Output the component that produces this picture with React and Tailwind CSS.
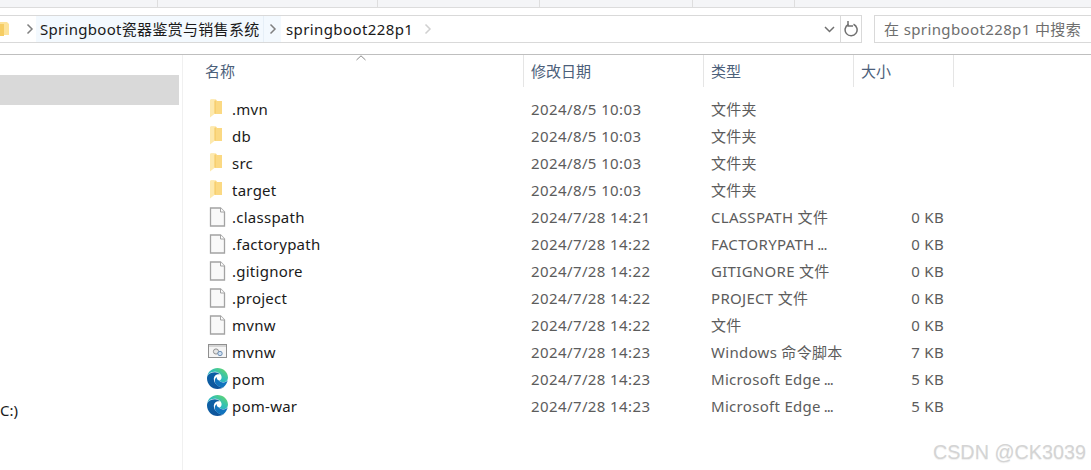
const FONT = 'font-["Noto_Sans","Noto_Sans_CJK_SC",sans-serif]';

const FILES = [
  { name: '.mvn', date: '2024/8/5 10:03', type: '文件夹', size: '', icon: 'folder' },
  { name: 'db', date: '2024/8/5 10:03', type: '文件夹', size: '', icon: 'folder' },
  { name: 'src', date: '2024/8/5 10:03', type: '文件夹', size: '', icon: 'folder' },
  { name: 'target', date: '2024/8/5 10:03', type: '文件夹', size: '', icon: 'folder' },
  { name: '.classpath', date: '2024/7/28 14:21', type: 'CLASSPATH 文件', size: '0 KB', icon: 'file' },
  { name: '.factorypath', date: '2024/7/28 14:22', type: 'FACTORYPATH', cut: true, size: '0 KB', icon: 'file' },
  { name: '.gitignore', date: '2024/7/28 14:22', type: 'GITIGNORE 文件', size: '0 KB', icon: 'file' },
  { name: '.project', date: '2024/7/28 14:22', type: 'PROJECT 文件', size: '0 KB', icon: 'file' },
  { name: 'mvnw', date: '2024/7/28 14:22', type: '文件', size: '0 KB', icon: 'file' },
  { name: 'mvnw', date: '2024/7/28 14:23', type: 'Windows 命令脚本', size: '7 KB', icon: 'cmd' },
  { name: 'pom', date: '2024/7/28 14:23', type: 'Microsoft Edge', cut: true, size: '5 KB', icon: 'edge' },
  { name: 'pom-war', date: '2024/7/28 14:23', type: 'Microsoft Edge', cut: true, size: '5 KB', icon: 'edge' },
];

function FolderIcon() {
  return (
    <svg width="21" height="20" viewBox="0 0 21 20" className="shrink-0">
      <path d="M4 .5h5l1 1.500h5v13H7z" fill="#fbd983" />
      <path d="M3 .5h4l1 1.500v12.500L3 18.500z" fill="#fde9ae" />
      <path d="M8 2v12.500" stroke="#f3c65e" fill="none" />
    </svg>
  );
}

function FileIcon() {
  return (
    <svg width="21" height="20" viewBox="0 0 21 20" className="shrink-0">
      <path d="M3.500 1h10l4 4v14h-14z" fill="#f9f9f9" stroke="#a3a3a3" strokeWidth="1.300" />
      <path d="M13.500 1v4h4" fill="#fff" stroke="#a3a3a3" />
    </svg>
  );
}

function CmdIcon() {
  return (
    <svg width="21" height="20" viewBox="0 0 21 20" className="shrink-0">
      <rect x="1.500" y="2.500" width="18" height="13" fill="#f4f4f4" stroke="#8f8f8f" />
      <rect x="2" y="3" width="17" height="2" fill="#d4d4d4" />
      <circle cx="9" cy="9.500" r="2.600" fill="#e6e6e6" stroke="#909090" />
      <circle cx="13" cy="11.500" r="2.200" fill="#cfe0f2" stroke="#6d8fb5" />
    </svg>
  );
}

function EdgeIcon({ id }) {
  return (
    <svg width="21" height="21" viewBox="0 0 20 20" className="shrink-0">
      <defs>
        <linearGradient id={`${id}-top`} x1="0" y1="1" x2="1" y2="0">
          <stop offset="0" stopColor="#1b9de2" />
          <stop offset=".55" stopColor="#35c1b2" />
          <stop offset="1" stopColor="#6fdb5c" />
        </linearGradient>
        <linearGradient id={`${id}-low`} x1="0" y1="0" x2="1" y2="1">
          <stop offset="0" stopColor="#0b63a8" />
          <stop offset="1" stopColor="#0f4f96" />
        </linearGradient>
      </defs>
      <path d="M10 0C15.500 0 20 4 20 9.200c0 2.600-2 4.300-4.600 4.300-1.900 0-3.600-.7-3.800-1.500 1.300-.4 2.300-1.500 2.300-3 0-3-3-5.500-6.500-5.500C4.500 3.500 1.500 4.800.2 8 1 3.400 5 0 10 0z" fill={`url(#${id}-top)`} />
      <path d="M.2 8C1.500 5 4.500 4 7.500 4c2 0 3.700.8 4.700 2-3.200-.5-5.700 1.600-5.700 4.500 0 3.500 3 6.800 7 7.800.9.200 1.700.2 2.500.1C14.500 19.500 12.400 20 10 20 4.500 20 0 15.500 0 10c0-.7.100-1.400.2-2z" fill={`url(#${id}-low)`} />
      <path d="M11.500 12c.5 1 2.200 1.700 4 1.700 2 0 3.500-.8 4.300-2.200-.6 3-2.400 5.400-4.300 6.900-.8.100-1.600.1-2.500-.1-3.300-.9-5.600-3.500-5.600-6 0-1.600.8-3 2-3.700-.4 1.500.6 2.800 2.100 3.400z" fill="#1173bd" />
    </svg>
  );
}

function RowIcon({ kind, id }) {
  if (kind === 'folder') return <FolderIcon />;
  if (kind === 'file') return <FileIcon />;
  if (kind === 'cmd') return <CmdIcon />;
  return <EdgeIcon id={id} />;
}

function Chevron({ color = '#808080' }) {
  return (
    <svg width="8" height="12" viewBox="0 0 8 12" className="shrink-0">
      <path d="M1.500 1.500 6 6l-4.500 4.500" fill="none" stroke={color} strokeWidth="1.500" />
    </svg>
  );
}

function TopStrip() {
  return (
    <div className="flex h-2 bg-[#f4f5f7] border-b border-[#dcdcdc]">
      <div className="w-[158px] border-r border-[#dedede]" />
      <div className="w-[220px] border-r border-[#dedede]" />
      <div className="w-[162px] border-r border-[#dedede]" />
      <div className="w-[153px] border-r border-[#dedede]" />
      <div className="w-[102px] border-r border-[#dedede]" />
    </div>
  );
}

function AddressRow() {
  return (
    <div className="flex h-[47px] pt-[7px] pb-3 bg-white border-b border-[#bfbfbf]">
      <div className="flex w-[862px] h-[28px] border-y border-r border-[#d9d9d9] items-stretch">
        <div className="w-[36px] flex items-center overflow-hidden">
          <svg width="10" height="16" viewBox="0 0 10 16" className="shrink-0">
            <path d="M0 1h7l2 2v11H0z" fill="#fde39a" />
            <path d="M0 3h4v12H0z" fill="#f6cd63" />
          </svg>
          <div className="ml-4"><Chevron /></div>
        </div>
        <div className="w-[227px] bg-[#f3f9fe] pl-1 flex items-center text-[15px] tracking-[0.3px] text-[#1a1a1a] whitespace-nowrap">
          Springboot瓷器鉴赏与销售系统
        </div>
        <div className="w-[18px] bg-[#f3f9fe] border-l border-[#e6eff7] flex items-center justify-center"><Chevron /></div>
        <div className="pl-[5px] flex items-center text-[15px] tracking-[0.4px] text-[#1a1a1a]">springboot228p1</div>
        <div className="ml-[11px] flex items-center"><Chevron color="#d0d0d0" /></div>
        <div className="ml-auto w-[21px] flex items-center justify-center">
          <svg width="11" height="7" viewBox="0 0 11 7"><path d="M1 1l4.500 4.500L10 1" fill="none" stroke="#707070" strokeWidth="1.500" /></svg>
        </div>
        <div className="w-[21px] border-l border-[#d9d9d9] flex items-center justify-center">
          <svg width="15" height="16" viewBox="0 0 15 16"><path d="M9.500 3.300A6 6 0 1 1 4.500 3.400" fill="none" stroke="#707070" strokeWidth="1.500" /><path d="M4 0v5H9" fill="none" stroke="#707070" strokeWidth="1.500" /></svg>
        </div>
      </div>
      <div className="ml-3 flex-1 h-[28px] border-y border-l border-[#d9d9d9] flex items-center pl-[9px] text-[15px] tracking-[0.38px] text-[#6e6e6e] whitespace-nowrap overflow-hidden">
        在 springboot228p1 中搜索
      </div>
    </div>
  );
}

function Sidebar() {
  return (
    <div className="w-[183px] h-[415px] shrink-0 border-r border-[#f0f0f0] pt-5 text-[15px] text-[#1a1a1a]">
      <div className="w-[179px] h-[30px] bg-[#d9d9d9]" />
      <div className="mt-[295px] leading-[20px]">C:)</div>
    </div>
  );
}

function ColumnHeader() {
  return (
    <div className="relative flex h-[32px] text-[15px] text-[#4c607a]">
      <div className="w-[341px] pl-[22px] pt-[5px] border-r border-[#e5e5e5]">名称</div>
      <div className="w-[180px] pl-[7px] pt-[5px] border-r border-[#e5e5e5]">修改日期</div>
      <div className="w-[150px] pl-[7px] pt-[5px] border-r border-[#e5e5e5]">类型</div>
      <div className="w-[100px] pl-[7px] pt-[5px] border-r border-[#e5e5e5]">大小</div>
      <svg width="10" height="6" viewBox="0 0 10 6" className="absolute left-[173px] top-0">
        <path d="M.5 5 5 .8 9.500 5" fill="none" stroke="#8a8a8a" />
      </svg>
    </div>
  );
}

function FileRow({ file, index }) {
  return (
    <div className="flex items-center h-[27px] text-[15px] whitespace-nowrap">
      <div className="w-[49px] pl-[24px] mb-[2px] flex shrink-0"><RowIcon kind={file.icon} id={`edge${index}`} /></div>
      <div className="w-[299px] text-[#1a1a1a] tracking-[0.25px] shrink-0">{file.name}</div>
      <div className="w-[180px] text-[#5c5c5c] tracking-[0.4px] shrink-0">{file.date}</div>
      <div className="w-[171px] text-[#5c5c5c] tracking-[0.3px] shrink-0 overflow-hidden">
        {file.type}
        {file.cut && <span className="tracking-[-1px]"> ...</span>}
      </div>
      <div className="w-[62px] text-[#5c5c5c] tracking-[0.3px] text-right shrink-0">{file.size}</div>
    </div>
  );
}

export default function App() {
  return (
    <div className={`relative w-[1091px] h-[470px] overflow-hidden bg-white ${FONT}`}>
      <TopStrip />
      <AddressRow />
      <div className="flex">
        <Sidebar />
        <div className="flex-1">
          <ColumnHeader />
          <div className="pt-[9px]">
            {FILES.map((f, i) => <FileRow key={i} file={f} index={i} />)}
          </div>
        </div>
      </div>
      <div className="absolute right-[5px] bottom-[6px] text-[19.8px] leading-[23px] text-[#d4d4d4] [text-shadow:0_1px_1px_#eeeeee] font-['Liberation_Sans',sans-serif]">CSDN @CK3039</div>
    </div>
  );
}
